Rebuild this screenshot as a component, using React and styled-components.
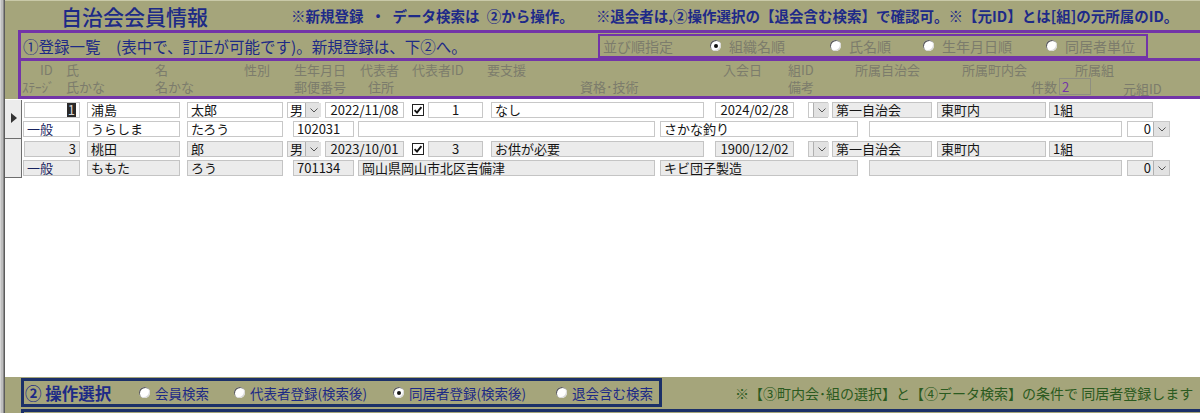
import React from 'react';
import styled, { createGlobalStyle } from 'styled-components';

const OLIVE = '#a5a57b';
const PURPLE = '#7334a8';
const NAVY = '#1d2a86';
const BOX_NAVY = '#1b3068';
const LABEL = '#7c7c6c';
const FONT = '"Noto Sans CJK JP", "Noto Sans", sans-serif';

const GlobalStyle = createGlobalStyle`
  html, body {
    margin: 0;
    padding: 0;
    overflow: hidden;
    background: #fff;
  }
  body {
    font-family: ${FONT};
  }
`;

// cells given by left edge x; width runs to the next cell
const placeCells = (items, origin) =>
  items.map((it, i) => {
    const next = items[i + 1];
    return { ...it, ml: i === 0 ? it.x - origin : 0, w: next ? next.x - it.x : undefined };
  });

// fields given by [x1, x2]; margin is the gap from the previous field
const placeFields = (fields, origin) => {
  let prev = origin;
  return fields.map((f) => {
    const out = { ...f, ml: f.x1 - prev, w: f.x2 - f.x1 };
    prev = f.x2;
    return out;
  });
};

const HEAD_1 = [
  { x: 40, t: 'ID' },
  { x: 66, t: '氏' },
  { x: 155, t: '名' },
  { x: 244, t: '性別' },
  { x: 294, t: '生年月日' },
  { x: 360, t: '代表者' },
  { x: 412, t: '代表者ID' },
  { x: 487, t: '要支援' },
  { x: 723, t: '入会日' },
  { x: 788, t: '組ID' },
  { x: 855, t: '所属自治会' },
  { x: 962, t: '所属町内会' },
  { x: 1075, t: '所属組' },
];

const HEAD_2 = [
  { x: 22, t: 'ｽﾃｰｼﾞ' },
  { x: 66, t: '氏かな' },
  { x: 155, t: '名かな' },
  { x: 294, t: '郵便番号' },
  { x: 368, t: '住所' },
  { x: 580, t: '資格･技術' },
  { x: 788, t: '備考' },
  { x: 1031, t: '件数', count: '2' },
  { x: 1123, t: '元組ID', dy: 4 },
];

const ROW_A = [
  { x1: 24, x2: 80, k: 'id', align: 'right' },
  { x1: 87, x2: 180, k: 'sei' },
  { x1: 187, x2: 283, k: 'mei' },
  { x1: 287, x2: 319, k: 'sex', type: 'combo' },
  { x1: 325, x2: 404, k: 'birth', align: 'center' },
  { x1: 411, x2: 425, k: 'rep', type: 'check' },
  { x1: 428, x2: 483, k: 'repId', align: 'center' },
  { x1: 491, x2: 704, k: 'support' },
  { x1: 715, x2: 794, k: 'joined', align: 'center' },
  { x1: 808, x2: 828, k: 'kumiId', type: 'combo' },
  { x1: 832, x2: 932, k: 'jichi', locked: true },
  { x1: 937, x2: 1046, k: 'chonai', locked: true },
  { x1: 1049, x2: 1153, k: 'kumi', locked: true },
];

const ROW_B = [
  { x1: 23, x2: 80, k: 'stage', navy: true },
  { x1: 87, x2: 180, k: 'seiKana' },
  { x1: 187, x2: 283, k: 'meiKana' },
  { x1: 293, x2: 354, k: 'zip' },
  { x1: 358, x2: 655, k: 'addr' },
  { x1: 660, x2: 858, k: 'skill' },
  { x1: 869, x2: 1122, k: 'note' },
  { x1: 1127, x2: 1170, k: 'oldKumi', type: 'combo', align: 'right' },
];

const MEMBERS = [
  {
    id: '1', sei: '浦島', mei: '太郎', sex: '男', birth: '2022/11/08', rep: true, repId: '1',
    support: 'なし', joined: '2024/02/28', kumiId: '', jichi: '第一自治会', chonai: '東町内', kumi: '1組',
    stage: '一般', seiKana: 'うらしま', meiKana: 'たろう', zip: '102031', addr: '', skill: 'さかな釣り',
    note: '', oldKumi: '0',
  },
  {
    id: '3', sei: '桃田', mei: '郎', sex: '男', birth: '2023/10/01', rep: true, repId: '3',
    support: 'お供が必要', joined: '1900/12/02', kumiId: '', jichi: '第一自治会', chonai: '東町内', kumi: '1組',
    stage: '一般', seiKana: 'ももた', meiKana: 'ろう', zip: '701134', addr: '岡山県岡山市北区吉備津',
    skill: 'キビ団子製造', note: '', oldKumi: '0',
  },
];

const SORT_OPTIONS = [
  { x: 710, t: '組織名順', on: true },
  { x: 830, t: '氏名順' },
  { x: 923, t: '生年月日順' },
  { x: 1046, t: '同居者単位' },
];

const OPERATIONS = [
  { x: 139, t: '会員検索' },
  { x: 234, t: '代表者登録(検索後)' },
  { x: 393, t: '同居者登録(検索後)', on: true },
  { x: 556, t: '退会含む検索' },
];

const Chevron = () => (
  <svg width="8" height="5" viewBox="0 0 8 5">
    <polyline points="0.5,0.5 4,4 7.5,0.5" fill="none" stroke="#555" strokeWidth="1" />
  </svg>
);

const CheckMark = () => (
  <svg width="12" height="12" viewBox="0 0 12 12">
    <rect x="0.5" y="0.5" width="11" height="11" fill="#fff" stroke="#222" />
    <path d="M2.6 6.2 L5 8.6 L9.4 3.2" fill="none" stroke="#111" strokeWidth="1.9" />
  </svg>
);

const RecordMark = () => (
  <svg width="6" height="10" viewBox="0 0 6 10">
    <polygon points="0,0 6,5 0,10" fill="#333" />
  </svg>
);

const App = () => {
  const head1 = placeCells(HEAD_1, 21);
  const head2 = placeCells(HEAD_2, 21);
  const sort = placeCells(SORT_OPTIONS, 710);
  const ops = placeCells(OPERATIONS, 139);
  const rowA = placeFields(ROW_A, 22);
  const rowB = placeFields(ROW_B, 22);

  const renderField = (f, m, current) => {
    const value = m[f.k];
    if (f.type === 'check') {
      return (
        <CheckCell key={f.k} $ml={f.ml} $w={f.w}>
          <CheckMark />
        </CheckCell>
      );
    }
    const dim = !current || f.locked;
    if (f.type === 'combo') {
      return (
        <Field key={f.k} $ml={f.ml} $w={f.w} $dim={dim} $combo>
          <FieldText $align={f.align}>{value}</FieldText>
          <DropButton>
            <Chevron />
          </DropButton>
        </Field>
      );
    }
    return (
      <Field key={f.k} $ml={f.ml} $w={f.w} $dim={dim} $align={f.align} $navy={f.navy}>
        {current && f.k === 'id' ? <Caret>{value}</Caret> : value}
      </Field>
    );
  };

  return (
    <>
      <GlobalStyle />
      <Window>
        <WinEdge />
        <Main>
          <Header>
            <TitleRow>
              <Title>自治会会員情報</Title>
              <Notice $ws={4}>※新規登録 ・ データ検索は ②から操作。</Notice>
              <Notice $ml={22}>※退会者は,②操作選択の【退会含む検索】で確認可。※【元ID】とは[組]の元所属のID。</Notice>
            </TitleRow>
            <ListBox>
              <Caption>①登録一覧　(表中で、訂正が可能です)。新規登録は、下②へ。</Caption>
              <SortBox>
                <SortLabel>並び順指定</SortLabel>
                {sort.map((o) => (
                  <Option key={o.t} $ml={o.ml} $w={o.w} $gap={8}>
                    <RadioDot $on={o.on} />
                    <SortText>{o.t}</SortText>
                  </Option>
                ))}
              </SortBox>
            </ListBox>
            <HeadBox>
              <HeadRow>
                {head1.map((c) => (
                  <HeadCell key={c.t} $ml={c.ml} $w={c.w}>{c.t}</HeadCell>
                ))}
              </HeadRow>
              <HeadRow>
                {head2.map((c) => (
                  <HeadCell key={c.t} $ml={c.ml} $w={c.w} $dy={c.dy}>
                    {c.t}
                    {c.count && <CountBox>{c.count}</CountBox>}
                  </HeadCell>
                ))}
              </HeadRow>
            </HeadBox>
          </Header>

          <Detail>
            {MEMBERS.map((m, i) => {
              const current = i === 0;
              return (
                <Record key={m.id}>
                  <Selector>{current && <RecordMark />}</Selector>
                  <RecordBody>
                    <Row>{rowA.map((f) => renderField(f, m, current))}</Row>
                    <Row>{rowB.map((f) => renderField(f, m, current))}</Row>
                    <Separator />
                  </RecordBody>
                </Record>
              );
            })}
          </Detail>

          <Footer>
            <FooterRow>
              <OpBox>
                <OpTitle>② 操作選択</OpTitle>
                {ops.map((o) => (
                  <Option key={o.t} $ml={o.ml} $w={o.w} $gap={5}>
                    <RadioDot $on={o.on} />
                    <OpText>{o.t}</OpText>
                  </Option>
                ))}
              </OpBox>
              <OpNote>※【③町内会･組の選択】と【④データ検索】の条件で 同居者登録します</OpNote>
            </FooterRow>
            <NextBox />
          </Footer>
        </Main>
      </Window>
    </>
  );
};

const Window = styled.div`
  display: flex;
  width: 1200px;
  height: 413px;
  overflow: hidden;
  background: #fff;
`;

const WinEdge = styled.div`
  flex: 0 0 5px;
  background: linear-gradient(to right, #d4d4d4 0 1px, #bdbdbd 1px 3px, #8c8c8c 3px 4px, #5c5c5c 4px 5px);
`;

const Main = styled.div`
  flex: 1;
  display: flex;
  flex-direction: column;
  min-width: 0;
`;

const Header = styled.header`
  background: ${OLIVE};
  border-top: 1px solid #c9c9a8;
  padding-left: 13px;
  height: 99px;
  box-sizing: border-box;
`;

const TitleRow = styled.div`
  display: flex;
  align-items: center;
  height: 29px;
  white-space: nowrap;
`;

const Title = styled.h1`
  margin: 0 0 0 43px;
  width: 230px;
  flex-shrink: 0;
  font-size: 21px;
  line-height: 28px;
  font-weight: 500;
  color: ${NAVY};
`;

const Notice = styled.span`
  margin-left: ${(p) => p.$ml || 0}px;
  word-spacing: ${(p) => p.$ws || 0}px;
  font-size: 14.5px;
  font-weight: 700;
  color: #1e2a88;
`;

const ListBox = styled.div`
  display: flex;
  align-items: center;
  height: 25px;
  border: 3px solid ${PURPLE};
  border-right: none;
`;

const Caption = styled.div`
  flex: 0 0 577px;
  padding-left: 2px;
  box-sizing: border-box;
  font-size: 15.5px;
  color: ${NAVY};
  white-space: nowrap;
`;

const SortBox = styled.div`
  display: flex;
  align-items: center;
  width: 550px;
  height: 24px;
  box-sizing: border-box;
  border: 2px solid ${PURPLE};
  padding-left: 3px;
`;

const SortLabel = styled.span`
  width: 107px;
  flex-shrink: 0;
  font-size: 14px;
  color: ${LABEL};
`;

const Option = styled.label`
  display: flex;
  align-items: center;
  gap: ${(p) => p.$gap}px;
  margin-left: ${(p) => p.$ml || 0}px;
  width: ${(p) => (p.$w ? `${p.$w}px` : 'auto')};
  flex-shrink: 0;
  white-space: nowrap;
`;

const RadioDot = styled.span`
  position: relative;
  flex: 0 0 11px;
  height: 11px;
  border-radius: 50%;
  background: #fff;
  box-shadow: inset 1px 1px 0 #5a5a5a, inset -1px -1px 0 #d8d8d8;
  &::after {
    content: '';
    display: ${(p) => (p.$on ? 'block' : 'none')};
    position: absolute;
    left: 3.5px;
    top: 3.5px;
    width: 4px;
    height: 4px;
    border-radius: 50%;
    background: #111;
  }
`;

const SortText = styled.span`
  font-size: 14px;
  color: ${LABEL};
`;

const HeadBox = styled.div`
  height: 35px;
  border-left: 3px solid ${PURPLE};
  border-bottom: 3px solid ${PURPLE};
  display: flex;
  flex-direction: column;
`;

const HeadRow = styled.div`
  display: flex;
  align-items: center;
  height: 17px;
  white-space: nowrap;
`;

const HeadCell = styled.span`
  display: flex;
  align-items: center;
  margin-left: ${(p) => p.$ml || 0}px;
  width: ${(p) => (p.$w ? `${p.$w}px` : 'auto')};
  flex-shrink: 0;
  padding-top: ${(p) => p.$dy || 0}px;
  font-size: 13px;
  line-height: 17px;
  color: ${LABEL};
`;

const CountBox = styled.span`
  margin-left: 2px;
  width: 32px;
  height: 17px;
  box-sizing: border-box;
  border: 1px solid #8e8e80;
  padding-left: 2px;
  line-height: 15px;
  font-size: 13px;
  color: ${PURPLE};
`;

const Detail = styled.section`
  flex: 1;
  background: #fff;
  padding-top: 1px;
`;

const Record = styled.div`
  display: flex;
  height: 39px;
`;

const Selector = styled.div`
  flex: 0 0 17px;
  box-sizing: border-box;
  background: #ececec;
  border-right: 1px solid #6e6e6e;
  border-bottom: 1px solid #6e6e6e;
  padding: 4px 0 0 6px;
`;

const RecordBody = styled.div`
  flex: 1;
  display: flex;
  flex-direction: column;
  padding-top: 2px;
  gap: 3px;
`;

const Row = styled.div`
  display: flex;
  height: 16px;
`;

const Separator = styled.div`
  height: 2px;
  margin: auto 0 0 8px;
  background: #6e8c68;
`;

const Field = styled.div`
  display: flex;
  align-items: center;
  justify-content: ${(p) => (p.$align === 'right' ? 'flex-end' : p.$align === 'center' ? 'center' : 'flex-start')};
  margin-left: ${(p) => p.$ml}px;
  width: ${(p) => p.$w}px;
  flex-shrink: 0;
  box-sizing: border-box;
  border: 1px solid ${(p) => (p.$dim ? '#c4c4c4' : '#c8c8c8')};
  background: ${(p) => (p.$dim ? '#ebebeb' : '#fff')};
  padding: ${(p) => (p.$combo ? '0' : '0 3px')};
  white-space: nowrap;
  font-size: 13px;
  line-height: 14px;
  color: ${(p) => (p.$navy ? '#17225e' : '#151515')};
`;

const FieldText = styled.span`
  flex: 1;
  padding: 0 2px;
  text-align: ${(p) => p.$align || 'left'};
`;

const DropButton = styled.span`
  flex: 0 0 15px;
  align-self: stretch;
  display: flex;
  align-items: center;
  justify-content: center;
  background: #e2e2e2;
  border-left: 1px solid #b0b0b0;
`;

const CheckCell = styled.div`
  display: flex;
  align-items: center;
  justify-content: center;
  margin-left: ${(p) => p.$ml}px;
  width: ${(p) => p.$w}px;
  flex-shrink: 0;
`;

const Caret = styled.span`
  background: #2a2a2a;
  color: #d8d8d8;
  padding: 0 1px;
`;

const Footer = styled.footer`
  background: ${OLIVE};
  height: 36px;
  padding: 1px 0 0 16px;
  box-sizing: border-box;
  display: flex;
  flex-direction: column;
  gap: 2px;
`;

const FooterRow = styled.div`
  display: flex;
  align-items: center;
`;

const OpBox = styled.div`
  display: flex;
  align-items: center;
  width: 641px;
  height: 29px;
  box-sizing: border-box;
  border: 3px solid ${BOX_NAVY};
  flex-shrink: 0;
`;

const OpTitle = styled.span`
  width: 115px;
  flex-shrink: 0;
  padding-left: 1px;
  box-sizing: border-box;
  font-size: 16.5px;
  font-weight: 700;
  color: ${NAVY};
  white-space: nowrap;
`;

const OpText = styled.span`
  font-size: 13.5px;
  color: ${NAVY};
`;

const OpNote = styled.span`
  margin-left: 73px;
  font-size: 14px;
  color: #2b5a20;
  white-space: nowrap;
`;

const NextBox = styled.div`
  flex: 1;
  border-top: 3px solid ${BOX_NAVY};
  border-left: 3px solid ${BOX_NAVY};
`;

export default App;
